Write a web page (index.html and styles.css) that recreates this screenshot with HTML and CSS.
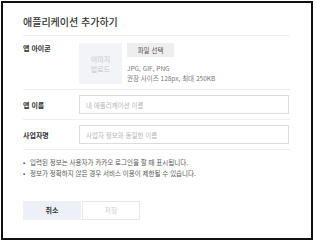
FILE: index.html
```html
<!DOCTYPE html>
<html lang="ko">

<head>
    <meta charset="UTF-8">
    <meta name="viewport" content="width=device-width, initial-scale=1.0">
    <title>애플리케이션 추가하기</title>
    <link rel="stylesheet" href="styles.css">
</head>

<body>
    <div class="modal">
        <div class="modal-title">애플리케이션 추가하기</div>

        <div class="form-row icon-row">
            <div class="label">앱 아이콘</div>
            <div class="icon-field">
                <div class="icon-box">이미지<br>업로드</div>
                <div class="icon-info">
                    <div class="file-button">파일 선택</div>
                    <div class="hint">JPG, GIF, PNG</div>
                    <div class="hint">권장 사이즈 128px, 최대 250KB</div>
                </div>
            </div>
        </div>

        <div class="form-row">
            <div class="label">앱 이름</div>
            <input class="text-input" type="text" placeholder="내 애플리케이션 이름">
        </div>

        <div class="form-row">
            <div class="label">사업자명</div>
            <input class="text-input" type="text" placeholder="사업자 정보와 동일한 이름">
        </div>

        <ul class="notes">
            <li>입력된 정보는 사용자가 카카오 로그인을 할 때 표시됩니다.</li>
            <li>정보가 정확하지 않은 경우 서비스 이용이 제한될 수 있습니다.</li>
        </ul>

        <div class="actions">
            <div class="btn btn-cancel">취소</div>
            <div class="btn btn-save">저장</div>
        </div>
    </div>
</body>

</html>
```

FILE: styles.css
```css
body {
    font-family: "Noto Sans CJK KR", "Noto Sans", sans-serif;
    background-color: #ffffff;
    margin: 0;
    padding: 1px;
    color: #333;
}

.modal {
    width: 312px;
    height: 239px;
    box-sizing: border-box;
    border: 2px solid #111;
    padding: 11px 21px 0 20px;
    background: #ffffff;
}

.modal-title {
    font-size: 10px;
    line-height: 16px;
    font-weight: 500;
    color: #333;
    padding-bottom: 5px;
    border-bottom: 1px solid #eeeeee;
}

.form-row {
    display: flex;
    align-items: center;
    padding: 5px 0;
    border-bottom: 1px solid #eeeeee;
}

.icon-row {
    align-items: flex-start;
    padding: 7px 0 5px;
}

.label {
    width: 56px;
    flex-shrink: 0;
    font-size: 7px;
    line-height: 10px;
    font-weight: bold;
    color: #333;
}

.icon-field {
    display: flex;
    gap: 5px;
}

.icon-box {
    width: 43px;
    height: 41px;
    background: #f2f4f8;
    color: #c2c6cd;
    font-size: 7px;
    line-height: 10px;
    display: flex;
    align-items: center;
    justify-content: center;
    text-align: center;
}

.file-button {
    width: 47px;
    height: 14px;
    background: #eeeeee;
    color: #555;
    font-size: 6.5px;
    line-height: 14px;
    text-align: center;
    margin-bottom: 6px;
}

.hint {
    font-size: 6.5px;
    line-height: 10px;
    color: #777;
}

.text-input {
    width: 210px;
    height: 19px;
    box-sizing: border-box;
    border: 1px solid #dcdcdc;
    padding: 0 6px;
    font-family: inherit;
    font-size: 6.5px;
    color: #333;
    outline: none;
}

.text-input::placeholder {
    color: #b5b5b5;
}

.notes {
    list-style: none;
    margin: 0;
    padding: 7px 0 0;
}

.notes li {
    font-size: 6.5px;
    line-height: 11px;
    color: #555;
}

.notes li::before {
    content: "•";
    display: inline-block;
    width: 7px;
}

.actions {
    display: flex;
    gap: 1px;
    margin-top: 22px;
}

.btn {
    width: 58px;
    height: 19px;
    box-sizing: border-box;
    font-size: 7px;
    line-height: 19px;
    text-align: center;
}

.btn-cancel {
    background: #eef0f7;
    color: #333;
    font-weight: bold;
}

.btn-save {
    border: 1px solid #e8e8e8;
    line-height: 17px;
    color: #cccccc;
}
```
